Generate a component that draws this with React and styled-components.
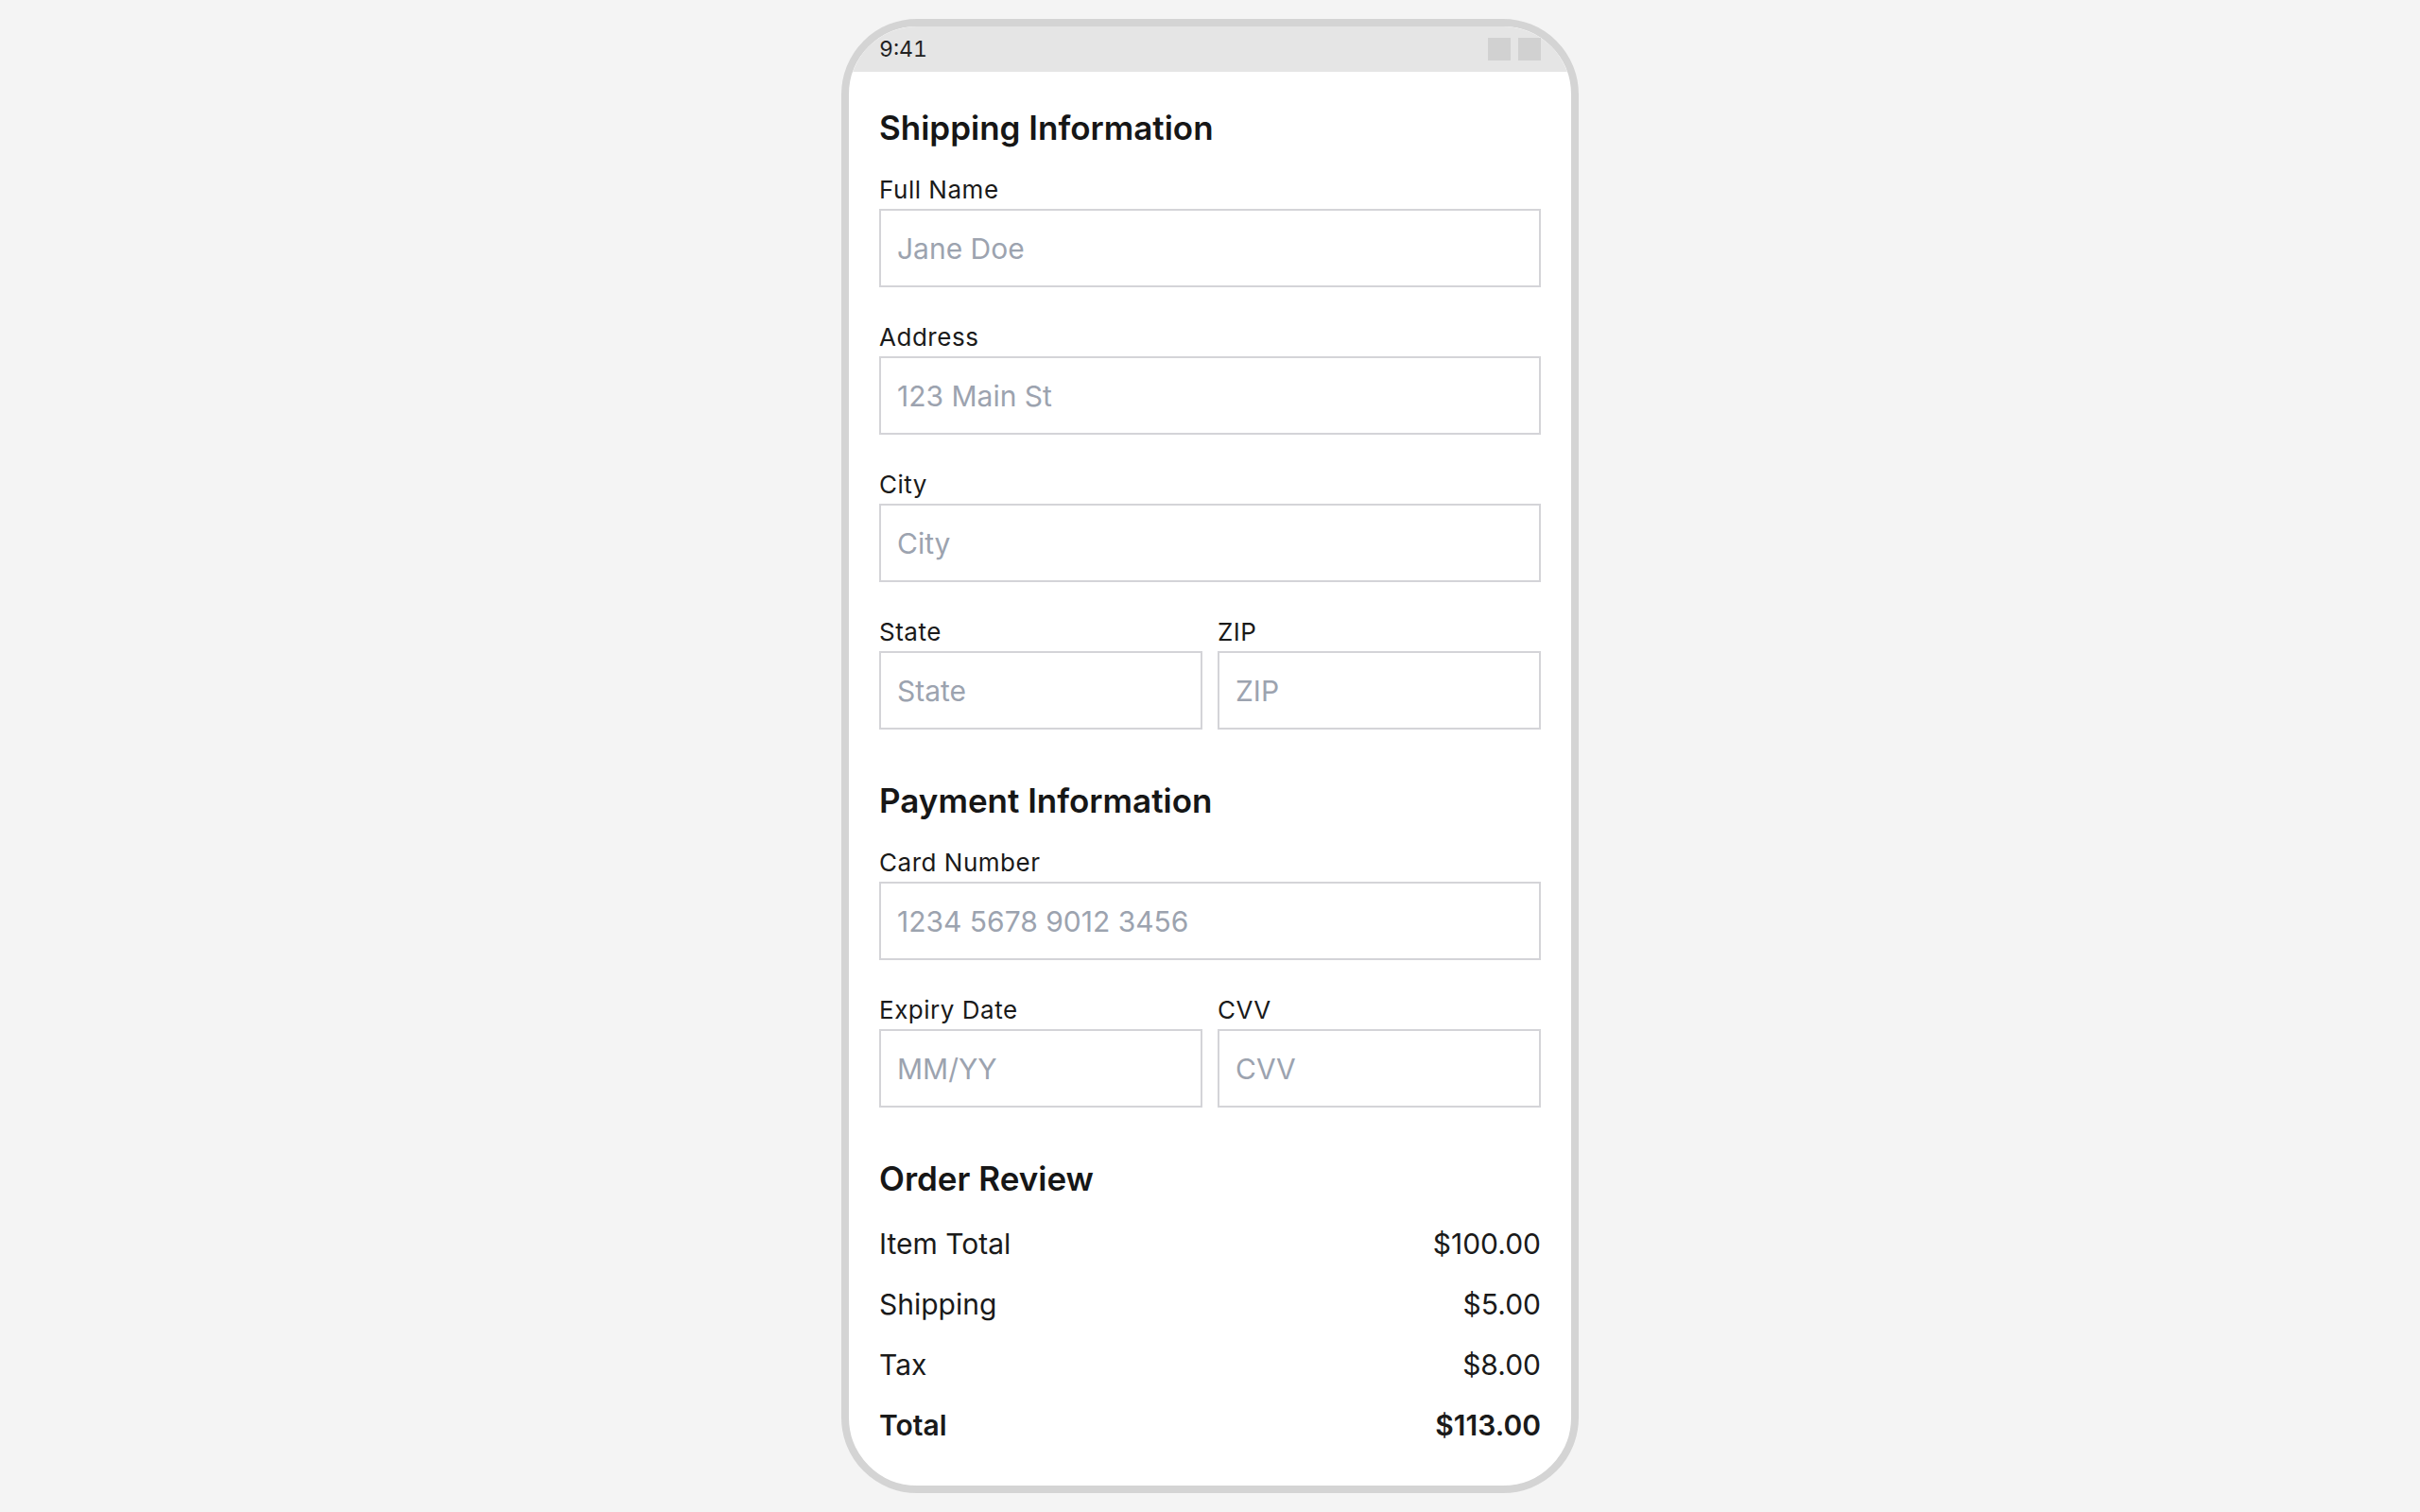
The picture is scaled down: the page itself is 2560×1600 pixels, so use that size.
import React from 'react';
import styled, { createGlobalStyle } from 'styled-components';

const GlobalStyle = createGlobalStyle`
  html, body {
    margin: 0;
    padding: 0;
    background: #f4f4f4;
    font-family: Inter, "Noto Sans", "Liberation Sans", sans-serif;
    color: #1a1a1a;
  }
  * {
    box-sizing: border-box;
  }
`;

const Page = styled.div`
  display: flex;
  justify-content: center;
  padding: 20px 0;
  min-height: 100vh;
`;

const Phone = styled.div`
  width: 780px;
  height: 1560px;
  border: 8px solid #d4d4d4;
  border-radius: 80px;
  overflow: hidden;
  background: #fff;
  display: flex;
  flex-direction: column;
`;

const StatusBar = styled.div`
  height: 48px;
  flex-shrink: 0;
  background: #e5e5e5;
  padding: 0 32px;
  display: flex;
  align-items: center;
  justify-content: space-between;
`;

const Time = styled.span`
  font-size: 23px;
  font-variant-numeric: tabular-nums;
  color: #222;
`;

const StatusIcons = styled.div`
  display: flex;
  gap: 8px;
`;

const StatusIcon = styled.span`
  width: 24px;
  height: 24px;
  background: #d1d1d1;
`;

const Content = styled.div`
  padding: 39px 32px 0;
`;

const Section = styled.section`
  & + & {
    margin-top: 17px;
  }
`;

const Title = styled.h2`
  margin: 0 0 ${(p) => p.$gap ?? 30}px;
  font-size: 35px;
  line-height: 41px;
  font-weight: 600;
  color: #161616;
`;

const Row = styled.div`
  display: grid;
  grid-template-columns: 1fr 1fr;
  gap: 16px;
`;

const Field = styled.div`
  margin-bottom: 38px;
`;

const Label = styled.label`
  display: block;
  font-size: 26px;
  line-height: 29px;
  letter-spacing: 0.02em;
  margin-bottom: 6px;
  color: #1a1a1a;
`;

const Input = styled.input`
  display: block;
  width: 100%;
  height: 83px;
  padding: 0 17px;
  border: 2px solid #d4d4d8;
  border-radius: 0;
  background: #fff;
  font-family: inherit;
  font-size: 30px;
  color: #1a1a1a;
  outline: none;

  &::placeholder {
    color: #9ca3af;
  }
`;

const Line = styled.div`
  display: flex;
  justify-content: space-between;
  font-size: 30px;
  line-height: 36px;
  padding: 14px 0;
  font-weight: ${(p) => (p.$total ? 600 : 400)};
  color: #1a1a1a;
`;

const shipping = [
  [{ label: 'Full Name', placeholder: 'Jane Doe' }],
  [{ label: 'Address', placeholder: '123 Main St' }],
  [{ label: 'City', placeholder: 'City' }],
  [
    { label: 'State', placeholder: 'State' },
    { label: 'ZIP', placeholder: 'ZIP' },
  ],
];

const payment = [
  [{ label: 'Card Number', placeholder: '1234 5678 9012 3456' }],
  [
    { label: 'Expiry Date', placeholder: 'MM/YY' },
    { label: 'CVV', placeholder: 'CVV' },
  ],
];

const summary = [
  { name: 'Item Total', amount: '$100.00' },
  { name: 'Shipping', amount: '$5.00' },
  { name: 'Tax', amount: '$8.00' },
  { name: 'Total', amount: '$113.00', total: true },
];

function FormField({ label, placeholder }) {
  const id = label.toLowerCase().replace(/\s+/g, '-');
  return (
    <Field>
      <Label htmlFor={id}>{label}</Label>
      <Input id={id} placeholder={placeholder} />
    </Field>
  );
}

function FieldRows({ rows }) {
  return rows.map((row, i) =>
    row.length > 1 ? (
      <Row key={i}>
        {row.map((f) => (
          <FormField key={f.label} {...f} />
        ))}
      </Row>
    ) : (
      <FormField key={i} {...row[0]} />
    )
  );
}

export default function App() {
  return (
    <>
      <GlobalStyle />
      <Page>
        <Phone>
          <StatusBar>
            <Time>9:41</Time>
            <StatusIcons>
              <StatusIcon />
              <StatusIcon />
            </StatusIcons>
          </StatusBar>
          <Content>
            <Section>
              <Title>Shipping Information</Title>
              <FieldRows rows={shipping} />
            </Section>
            <Section>
              <Title>Payment Information</Title>
              <FieldRows rows={payment} />
            </Section>
            <Section>
              <Title $gap={16}>Order Review</Title>
              {summary.map((s) => (
                <Line key={s.name} $total={s.total}>
                  <span>{s.name}</span>
                  <span>{s.amount}</span>
                </Line>
              ))}
            </Section>
          </Content>
        </Phone>
      </Page>
    </>
  );
}
